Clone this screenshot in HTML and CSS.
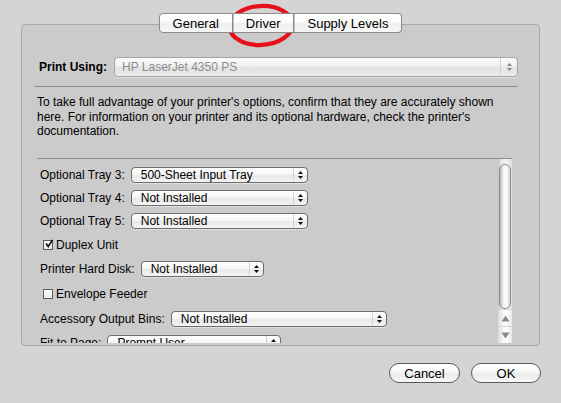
FILE: index.html
```html
<!DOCTYPE html>
<html>
<head>
<meta charset="utf-8">
<link rel="stylesheet" href="styles.css">
</head>
<body>
<div class="window">
  <div class="tabs">
    <div class="seg">General</div>
    <div class="seg">Driver</div>
    <div class="seg">Supply Levels</div>
  </div>
  <div class="panel">
    <div class="using">
      <span class="using-label">Print Using:</span>
      <div class="popup big disabled">
        <span class="val">HP LaserJet 4350 PS</span>
        <span class="arrows"><svg width="7" height="10" viewBox="0 0 7 10"><path d="M3.5 1 L6 4 L1 4 Z M1 6 L6 6 L3.5 9 Z" fill="#888"/></svg></span>
      </div>
    </div>
    <div class="sep"></div>
    <p class="info">To take full advantage of your printer's options, confirm that they are accurately shown<br>here. For information on your printer and its optional hardware, check the printer's<br>documentation.</p>
    <div class="list">
      <div class="rows">
        <div class="row">
          <span>Optional Tray 3:</span>
          <div class="popup w-tray"><span class="val">500-Sheet Input Tray</span><span class="arrows"><svg width="7" height="10" viewBox="0 0 7 10"><path d="M3.5 1 L6 4 L1 4 Z M1 6 L6 6 L3.5 9 Z" fill="#111"/></svg></span></div>
        </div>
        <div class="row">
          <span>Optional Tray 4:</span>
          <div class="popup w-tray"><span class="val">Not Installed</span><span class="arrows"><svg width="7" height="10" viewBox="0 0 7 10"><path d="M3.5 1 L6 4 L1 4 Z M1 6 L6 6 L3.5 9 Z" fill="#111"/></svg></span></div>
        </div>
        <div class="row">
          <span>Optional Tray 5:</span>
          <div class="popup w-tray"><span class="val">Not Installed</span><span class="arrows"><svg width="7" height="10" viewBox="0 0 7 10"><path d="M3.5 1 L6 4 L1 4 Z M1 6 L6 6 L3.5 9 Z" fill="#111"/></svg></span></div>
        </div>
        <div class="row check-row r24">
          <span class="box"><svg width="10" height="10" viewBox="0 0 10 10"><path d="M2 4.5 L4.2 7.5 L8.5 1" fill="none" stroke="#111" stroke-width="1.6"/></svg></span>
          <span>Duplex Unit</span>
        </div>
        <div class="row r25">
          <span>Printer Hard Disk:</span>
          <div class="popup w-disk"><span class="val">Not Installed</span><span class="arrows"><svg width="7" height="10" viewBox="0 0 7 10"><path d="M3.5 1 L6 4 L1 4 Z M1 6 L6 6 L3.5 9 Z" fill="#111"/></svg></span></div>
        </div>
        <div class="row check-row r25">
          <span class="box"></span>
          <span>Envelope Feeder</span>
        </div>
        <div class="row r24">
          <span>Accessory Output Bins:</span>
          <div class="popup w-bins"><span class="val">Not Installed</span><span class="arrows"><svg width="7" height="10" viewBox="0 0 7 10"><path d="M3.5 1 L6 4 L1 4 Z M1 6 L6 6 L3.5 9 Z" fill="#111"/></svg></span></div>
        </div>
        <div class="row r24">
          <span>Fit to Page:</span>
          <div class="popup w-fit"><span class="val">Prompt User</span><span class="arrows"><svg width="7" height="10" viewBox="0 0 7 10"><path d="M3.5 1 L6 4 L1 4 Z M1 6 L6 6 L3.5 9 Z" fill="#111"/></svg></span></div>
        </div>
      </div>
      <div class="scrollbar">
        <div class="thumb"></div>
        <div class="track-gap"></div>
        <div class="sbtn"><svg width="9" height="7" viewBox="0 0 9 7"><path d="M4.5 0.5 L8.5 6.5 L0.5 6.5 Z" fill="#8a8a8a"/></svg></div>
        <div class="sbtn"><svg width="9" height="7" viewBox="0 0 9 7"><path d="M0.5 0.5 L8.5 0.5 L4.5 6.5 Z" fill="#8a8a8a"/></svg></div>
      </div>
    </div>
  </div>
  <div class="buttons">
    <div class="btn cancel">Cancel</div>
    <div class="btn ok">OK</div>
  </div>
</div>
<svg class="mark" width="561" height="60" viewBox="0 0 561 60"><ellipse cx="261" cy="25.5" rx="31.5" ry="19.5" transform="rotate(-3 261 25.5)" fill="none" stroke="#e8101a" stroke-width="4.3"/></svg>
</body>
</html>
```
FILE: styles.css
```css
html, body {
  margin: 0;
  padding: 0;
}
body {
  width: 561px;
  height: 403px;
  overflow: hidden;
  position: relative;
  background: #d4d4d4;
  font-family: "Liberation Sans", Arial, sans-serif;
  font-size: 12px;
  color: #000;
}
.window {
  padding-top: 13px;
}
.tabs {
  position: relative;
  z-index: 1;
  display: flex;
  justify-content: center;
  height: 20px;
}
.seg {
  height: 20px;
  box-sizing: border-box;
  padding: 0 13px;
  display: flex;
  align-items: center;
  font-size: 13px;
  border: 1px solid #8a8a8a;
  border-left: none;
  background: linear-gradient(#ffffff, #fbfbfb 45%, #efefef 55%, #f6f6f6);
}
.seg:first-child {
  border-left: 1px solid #8a8a8a;
  border-radius: 4px 0 0 4px;
}
.seg:last-child {
  border-radius: 0 4px 4px 0;
}
.seg + .seg {
  box-shadow: inset 1px 0 0 #c4c4c4;
}
.panel {
  margin: -9px 21px 0;
  height: 322px;
  box-sizing: border-box;
  border: 1px solid #a9a9a9;
  border-radius: 4px;
  background: #cbcbcb;
  padding: 32px 21px 2px 15px;
  display: flex;
  flex-direction: column;
}
.using {
  display: flex;
  align-items: center;
  height: 20px;
}
.using-label {
  font-weight: bold;
  margin-left: 2px;
  margin-right: 7px;
}
.popup {
  display: flex;
  align-items: center;
  height: 16px;
  box-sizing: border-box;
  border: 1px solid #6c6c6c;
  border-radius: 4px;
  background: linear-gradient(#ffffff, #f6f6f6 45%, #e8e8e8 55%, #f4f4f4);
  box-shadow: 0 1px 0 rgba(255,255,255,0.4);
}
.popup .val {
  flex: 1;
  padding-left: 9px;
  white-space: nowrap;
  overflow: hidden;
}
.popup .arrows {
  width: 13px;
  height: 100%;
  border-left: 1px solid #d2d2d2;
  display: flex;
  align-items: center;
  justify-content: center;
}
.popup.big {
  flex: 1;
  height: 20px;
}
.popup.big .arrows {
  width: 16px;
}
.popup.disabled {
  border-color: #a4a4a4;
  color: #8c8c8c;
  background: linear-gradient(#fbfbfb, #f0f0f0 45%, #e2e2e2 55%, #ececec);
}
.popup.disabled .val {
  padding-left: 7px;
}
.w-tray { width: 177px; }
.w-disk { width: 123px; }
.w-bins { width: 216px; }
.w-fit { width: 174px; }
.sep {
  height: 1px;
  background: #8e8e8e;
  margin: 9px 0 0 -3px;
}
.info {
  margin: 8px 0 0;
  line-height: 14.5px;
  white-space: nowrap;
}
.list {
  flex: 1;
  min-height: 0;
  margin-top: 19px;
  margin-right: 6px;
  border-top: 1px solid #8e8e8e;
  display: flex;
  overflow: hidden;
}
.rows {
  flex: 1;
  padding: 5px 0 0 3px;
  overflow: hidden;
}
.row {
  height: 23px;
  display: flex;
  align-items: center;
  gap: 6px;
  white-space: nowrap;
}
.row.r24 { height: 24px; }
.row.r25 { height: 25px; }
.check-row {
  gap: 3px;
}
.box {
  width: 10px;
  height: 10px;
  box-sizing: border-box;
  margin-left: 3px;
  border: 1px solid #5c5c5c;
  background: linear-gradient(#ffffff, #e9e9e9);
  display: flex;
  align-items: center;
  justify-content: center;
}
.box svg {
  margin-top: -2px;
  margin-right: -2px;
}
.scrollbar {
  width: 14px;
  display: flex;
  flex-direction: column;
  background: linear-gradient(to right, #c4c4c4, #e6e6e6 25%, #f4f4f4 60%, #dedede);
}
.thumb {
  margin: 5px 1px 0;
  height: 145px;
  box-sizing: border-box;
  border: 1px solid #8c8c8c;
  border-radius: 7px;
  background: linear-gradient(to right, #b4b4b4, #eeeeee 30%, #ffffff 60%, #d6d6d6);
}
.track-gap {
  flex: 1;
}
.sbtn {
  height: 16px;
  display: flex;
  align-items: center;
  justify-content: center;
  border-top: 1px solid #d6d6d6;
  background: linear-gradient(to right, #dcdcdc, #f8f8f8 40%, #ffffff 60%, #e6e6e6);
}
.buttons {
  display: flex;
  justify-content: flex-end;
  gap: 11px;
  margin-top: 17px;
  padding-right: 20px;
}
.btn {
  height: 20px;
  box-sizing: border-box;
  border: 1px solid #5a5a5a;
  border-radius: 10px;
  display: flex;
  align-items: center;
  justify-content: center;
  font-size: 13px;
  background: linear-gradient(#ffffff, #f7f7f7 45%, #e9e9e9 55%, #f9f9f9);
}
.cancel { width: 71px; }
.ok { width: 70px; }
.mark {
  position: absolute;
  left: 0;
  top: 0;
  pointer-events: none;
}
```
